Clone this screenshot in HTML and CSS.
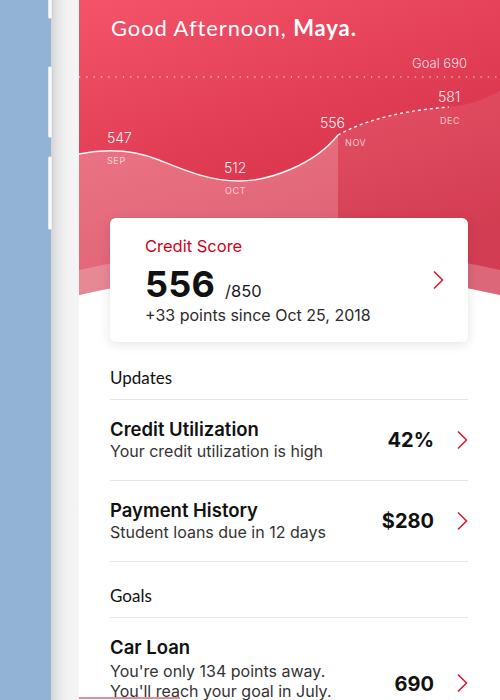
FILE: index.html
```html
<!DOCTYPE html>
<html lang="en">
<head>
<meta charset="utf-8">
<title>Credit</title>
<link rel="stylesheet" href="styles.css">
</head>
<body>
<div class="device">
  <span class="side-btn side-btn--a"></span>
  <span class="side-btn side-btn--b"></span>
  <span class="side-btn side-btn--c"></span>
  <div class="bezel"></div>
  <main class="screen">
    <header class="hero">
      <svg class="hero-art" width="421" height="300" viewBox="0 0 421 300">
        <defs>
          <linearGradient id="heroGrad" x1="0" y1="0" x2="0.45" y2="1">
            <stop offset="0" stop-color="#f4536a"/>
            <stop offset="1" stop-color="#cf2a42"/>
          </linearGradient>
          <clipPath id="heroClip">
            <path d="M0,0 H421 V295 Q210.5,247 0,295 Z"/>
          </clipPath>
        </defs>
        <path d="M0,0 H421 V295 Q210.5,247 0,295 Z" fill="url(#heroGrad)"/>
        <g clip-path="url(#heroClip)">
          <path d="M0,154 C30,148 55,150 80,160 S130,181 160,181 S235,165 259,135 L259,300 L0,300 Z" fill="#ffffff" fill-opacity="0.26"/>
          <path d="M259,135 C290,118 330,110 370,107 C392,105 408,98 421,91 L421,300 L259,300 Z" fill="#ffffff" fill-opacity="0.09"/>
          <path d="M0,270 Q210.5,222 421,270 L421,300 L0,300 Z" fill="#ffffff" fill-opacity="0.22"/>
        </g>
        <line x1="0" y1="77" x2="421" y2="77" stroke="#ffffff" stroke-opacity="0.6" stroke-width="1.3" stroke-dasharray="1.3 6"/>
        <path d="M0,154 C30,148 55,150 80,160 S130,181 160,181 S235,165 259,135" fill="none" stroke="#ffffff" stroke-width="1.4" stroke-opacity="0.95"/>
        <path d="M259,135 C290,118 330,110 370,107" fill="none" stroke="#ffffff" stroke-width="1.4" stroke-dasharray="3 3" stroke-opacity="0.95"/>
        <g class="chart-val">
          <text x="28" y="143">547</text>
          <text x="145" y="173">512</text>
          <text x="241" y="128">556</text>
          <text x="359" y="102">581</text>
          <text x="333" y="68" class="chart-goal">Goal 690</text>
        </g>
        <g class="chart-month">
          <text x="28" y="164">SEP</text>
          <text x="146" y="194">OCT</text>
          <text x="266" y="146">NOV</text>
          <text x="361" y="124">DEC</text>
        </g>
      </svg>
      <h1 class="greeting">Good Afternoon, <b>Maya.</b></h1>
    </header>

    <section class="score-card">
      <div class="score-body">
        <div class="score-label">Credit Score</div>
        <div class="score-line"><span class="score-num">556</span><span class="score-max">/850</span></div>
        <div class="score-delta">+33 points since Oct 25, 2018</div>
      </div>
      <svg class="chev" width="12" height="20" viewBox="0 0 12 20"><path d="M2,1.5 L10.5,10 L2,18.5" fill="none" stroke="#d81e36" stroke-width="1.6"/></svg>
    </section>

    <div class="list">
      <h2 class="list-head">Updates</h2>
      <div class="row">
        <div class="row-text">
          <div class="row-title">Credit Utilization</div>
          <div class="row-sub">Your credit utilization is high</div>
        </div>
        <div class="row-value">42%</div>
        <svg class="chev" width="12" height="20" viewBox="0 0 12 20"><path d="M2,1.5 L10.5,10 L2,18.5" fill="none" stroke="#d81e36" stroke-width="1.6"/></svg>
      </div>
      <div class="row">
        <div class="row-text">
          <div class="row-title">Payment History</div>
          <div class="row-sub">Student loans due in 12 days</div>
        </div>
        <div class="row-value">$280</div>
        <svg class="chev" width="12" height="20" viewBox="0 0 12 20"><path d="M2,1.5 L10.5,10 L2,18.5" fill="none" stroke="#d81e36" stroke-width="1.6"/></svg>
      </div>
      <h2 class="list-head">Goals</h2>
      <div class="row row--goal">
        <div class="row-text">
          <div class="row-title">Car Loan</div>
          <div class="row-sub">You're only 134 points away.<br>You'll reach your goal in July.</div>
        </div>
        <div class="row-value">690</div>
        <svg class="chev" width="12" height="20" viewBox="0 0 12 20"><path d="M2,1.5 L10.5,10 L2,18.5" fill="none" stroke="#d81e36" stroke-width="1.6"/></svg>
      </div>
    </div>
    <span class="tab-edge"></span>
  </main>
</div>
</body>
</html>
```

FILE: styles.css
```css
* { box-sizing: border-box; }

html, body {
  margin: 0;
  padding: 0;
  width: 500px;
  height: 700px;
  overflow: hidden;
  background: #92b3d6;
}

.device {
  position: relative;
  display: flex;
  margin-left: 51px;
  height: 700px;
}

.bezel {
  width: 28px;
  flex: none;
  background: linear-gradient(to right, #d5d5d5 0%, #e6e6e6 25%, #f2f2f2 55%, #f5f5f5 100%);
}

.side-btn {
  position: absolute;
  left: -3px;
  width: 5px;
  background: linear-gradient(to right, #ffffff, #f1f1f1);
  border: 1px solid #cfcfcf;
  border-left-color: #e4e4e4;
  border-radius: 2px;
}
.side-btn--a { top: -4px; height: 23px; }
.side-btn--b { top: 66px; height: 72px; }
.side-btn--c { top: 156px; height: 74px; }

.screen {
  position: relative;
  width: 421px;
  flex: none;
  height: 700px;
  overflow: hidden;
  background: #ffffff;
  font-family: "Inter", "Liberation Sans", sans-serif;
  color: #111111;
}

.hero {
  position: relative;
  height: 300px;
}

.hero-art {
  position: absolute;
  left: 0;
  top: 0;
  display: block;
}

.chart-val text {
  font-family: "Inter", "Liberation Sans", sans-serif;
  font-size: 14px;
  font-weight: 300;
  fill: #ffffff;
  fill-opacity: 0.92;
}
.chart-val .chart-goal {
  font-size: 13px;
  fill-opacity: 0.85;
}
.chart-month text {
  font-family: "Inter", "Liberation Sans", sans-serif;
  font-size: 9px;
  font-weight: 400;
  letter-spacing: 0.6px;
  fill: #ffffff;
  fill-opacity: 0.7;
}

.greeting {
  position: relative;
  margin: 0;
  padding: 15px 0 0 32px;
  font-family: "Lato", "Open Sans", sans-serif;
  font-size: 22px;
  line-height: 26px;
  font-weight: 400;
  letter-spacing: 0.9px;
  color: #ffffff;
}
.greeting b { font-weight: 700; }

.score-card {
  position: relative;
  margin: -82px 32px 0 31px;
  height: 124px;
  background: #ffffff;
  border-radius: 6px;
  box-shadow: 0 2px 12px rgba(60, 0, 10, 0.12);
  display: flex;
  align-items: center;
  padding: 0 24px 0 35px;
}

.score-body {
  flex: 1;
  align-self: flex-start;
  padding-top: 18px;
}

.score-label {
  color: #d0021b;
  font-size: 16.5px;
  line-height: 20px;
}
.score-line {
  display: flex;
  align-items: baseline;
  margin-top: 10px;
  line-height: 1;
}
.score-num {
  font-size: 36px;
  font-weight: 700;
  letter-spacing: 0.2px;
}
.score-max {
  margin-left: 10px;
  font-size: 16.5px;
  color: #1a1a1a;
}
.score-delta {
  margin-top: 3px;
  font-size: 16px;
  line-height: 20px;
  color: #2b2b2b;
}

.chev { display: block; flex: none; }

.list {
  padding: 0 32px 0 31px;
}

.list-head {
  margin: 0;
  padding: 26px 0 11px;
  font-family: "Lato", "Open Sans", sans-serif;
  font-size: 17px;
  line-height: 20px;
  font-weight: 400;
  color: #111111;
  border-bottom: 1px solid #e6e6e6;
}
.row + .list-head { padding-top: 24px; }

.row {
  display: flex;
  align-items: center;
  padding: 18px 0 18px;
  border-bottom: 1px solid #e6e6e6;
}
.row-text { flex: 1; }
.row-title {
  font-size: 18.5px;
  line-height: 22px;
  font-weight: 600;
  color: #111111;
}
.row-sub {
  margin-top: 1px;
  font-size: 16px;
  line-height: 21px;
  color: #333333;
}
.row-value {
  margin-right: 22px;
  font-size: 20px;
  font-weight: 700;
  color: #111111;
}
.row--goal { align-items: flex-end; }
.row--goal .row-sub { margin-top: 3px; line-height: 20px; }
.row--goal .row-value { margin-bottom: 5px; }
.row--goal .chev { margin-bottom: 8px; }

.tab-edge {
  position: absolute;
  left: 0;
  top: 697px;
  width: 101px;
  height: 2px;
  background: #e88b98;
}
```
